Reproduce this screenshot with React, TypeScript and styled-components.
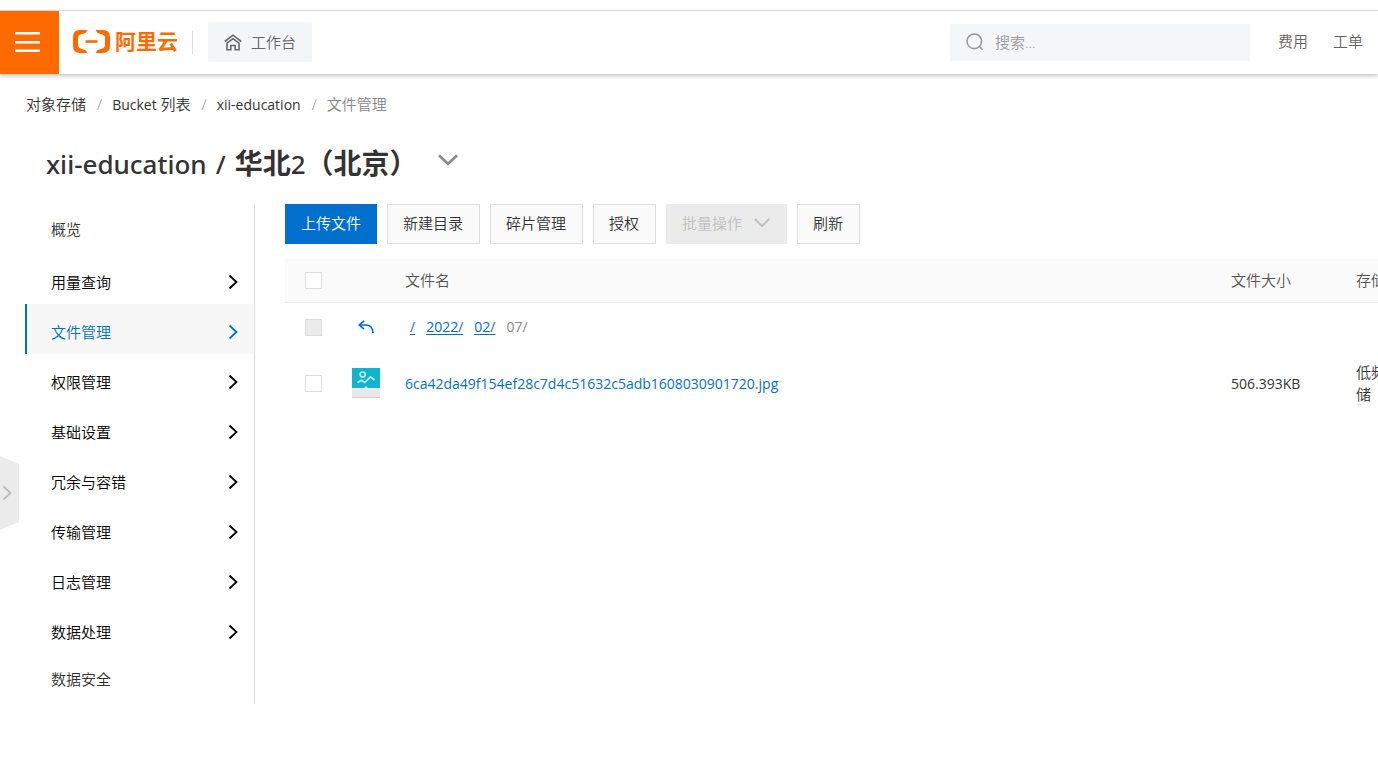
import React from "react";
import styled, { createGlobalStyle, css } from "styled-components";

const GlobalStyle = createGlobalStyle`
  *, *::before, *::after { box-sizing: border-box; }
  body {
    margin: 0;
    background: #fff;
    color: #333;
    font: 350 15px/22px "Open Sans", "Noto Sans CJK SC", sans-serif;
    overflow-x: hidden;
  }
  a { color: inherit; text-decoration: none; }
  button, input { font: inherit; }
  button { cursor: pointer; }
`;

const Latin = styled.span`
  font-size: 14px;
  font-weight: 400;
`;

const TopBar = styled.header`
  display: flex;
  align-items: center;
  height: 64px;
  margin-top: 10px;
  padding: 0 15px 1px 0;
  border-top: 1px solid #d9d9d9;
  background: #fff;
  box-shadow: 0 2px 4px rgba(0, 0, 0, 0.24);
`;

const MenuButton = styled.button`
  display: flex;
  align-items: center;
  justify-content: center;
  align-self: flex-start;
  flex: none;
  width: 59px;
  height: 63px;
  padding: 0 4px 2px 0;
  border: 0;
  background: #ff6a00;
`;

const Brand = styled.a`
  display: flex;
  align-items: center;
  gap: 5px;
  margin-left: 14px;
  padding-bottom: 1px;
  color: #ff6a00;
  font-size: 21px;
  font-weight: 700;
  line-height: 22px;
`;

const BrandName = styled.span`
  padding-bottom: 2px;
`;

const Divider = styled.span`
  width: 1px;
  height: 23px;
  margin: 0 15px 0 14px;
  background: #ddd;
`;

const Workbench = styled.a`
  display: flex;
  align-items: center;
  gap: 9px;
  height: 40px;
  padding: 0 16px;
  border-radius: 2px;
  background: #f4f5f7;
  color: #666;
`;

const Search = styled.label`
  display: flex;
  align-items: center;
  gap: 11px;
  width: 300px;
  height: 37px;
  margin-left: auto;
  padding: 0 16px;
  background: #f4f6f8;
`;

const SearchInput = styled.input`
  flex: 1;
  min-width: 0;
  padding: 0 0 1px;
  border: 0;
  outline: 0;
  background: transparent;
  color: #333;
  &::placeholder { color: #999; opacity: 1; }
`;

const TopLinks = styled.nav`
  display: flex;
  gap: 25px;
  margin-left: 28px;
  padding-bottom: 2px;
  color: #666;
`;

const Crumbs = styled.nav`
  display: flex;
  gap: 10px;
  padding: 19px 26px 0;
  color: #333;
`;

const CrumbLink = styled.a`
  padding-right: 1px;
`;

const Muted = styled.span`
  color: #888;
`;

const TitleRow = styled.div`
  display: flex;
  align-items: center;
  gap: 20px;
  padding: 27px 46px 0;
`;

const Title = styled.h1`
  display: flex;
  align-items: baseline;
  gap: 9px;
  margin: 0;
  font-size: 28px;
  line-height: 40px;
  font-weight: 700;
`;

const TitleLatin = styled.span`
  font-family: "Noto Sans", "Open Sans", sans-serif;
  font-size: 26px;
  font-weight: 500;
`;

const IconButton = styled.button`
  display: flex;
  padding: 0 0 7px;
  border: 0;
  background: none;
`;

const Body = styled.div`
  display: flex;
  margin-top: 20px;
  padding-left: 25px;
`;

const SideNav = styled.nav`
  flex: none;
  width: 230px;
  border-right: 1px solid #ddd;
`;

const SideItem = styled.a<{ $active?: boolean; $group?: boolean }>`
  display: flex;
  align-items: center;
  justify-content: space-between;
  height: 50px;
  padding: 0 15px 0 24px;
  border-left: 2px solid transparent;
  ${(p) => p.$group && css`
    padding-top: 5px;
    color: #000;
  `}
  ${(p) => p.$active && css`
    border-left-color: #0070cc;
    background: #f7f7f7;
    color: #0070cc;
  `}
`;

const Main = styled.main`
  flex: 1;
  min-width: 0;
  padding-left: 30px;
  overflow: hidden;
`;

const Toolbar = styled.div`
  display: flex;
  gap: 10px;
  margin-bottom: 15px;
`;

const ToolButton = styled.button<{ $primary?: boolean }>`
  display: flex;
  align-items: center;
  gap: 12px;
  height: 40px;
  padding: 0 16px 2px 15px;
  border: 1px solid #ddd;
  background: #fafafa;
  color: #333;
  white-space: nowrap;
  ${(p) => p.$primary && css`
    padding-right: 15px;
    border-color: #0070cc;
    background: #0070cc;
    color: #fff;
  `}
  &:disabled {
    border-color: #ebebeb;
    background: #ebebeb;
    color: #c1c1c1;
  }
`;

const Table = styled.table`
  width: calc(100% + 73px);
  table-layout: fixed;
  border-collapse: collapse;
`;

const HeadRow = styled.tr`
  height: 43px;
  border-bottom: 1px solid #ebebeb;
  background: #fafafa;
`;

const Row = styled.tr<{ $tall?: boolean }>`
  height: ${(p) => (p.$tall ? 62 : 50)}px;
`;

const HeadCell = styled.th`
  padding: 0 20px;
  color: #555;
  font-weight: 350;
  text-align: left;
`;

const Cell = styled.td`
  padding: 0 20px;
`;

const IconCell = styled.td`
  padding: 0;
  svg { display: block; margin: 0 auto; }
`;

const Col = styled.col<{ $w?: number }>`
  ${(p) => p.$w && `width: ${p.$w}px;`}
`;

const Check = styled.input`
  display: block;
  appearance: none;
  width: 17px;
  height: 17px;
  margin: 0;
  border: 1px solid #ddd;
  background: #fff;
  &:disabled { background: #ebebeb; }
`;

const Path = styled.div`
  display: flex;
  gap: 11px;
  padding-left: 5px;
  font-size: 14px;
  font-weight: 400;
`;

const PathLink = styled.a`
  color: #0070cc;
  text-decoration: underline;
  text-underline-offset: 2px;
`;

const FileLink = styled.a`
  color: #0070cc;
  font-size: 14px;
  font-weight: 400;
`;

const Drawer = styled.button`
  position: fixed;
  left: 0;
  top: 456px;
  display: flex;
  align-items: center;
  width: 19px;
  height: 74px;
  padding: 0 0 0 2px;
  border: 0;
  background: #ebebeb;
  clip-path: polygon(0 0, 100% 8px, 100% 66px, 0 100%);
`;

const ChevronRight = ({ color = "currentColor" }: { color?: string }) => (
  <svg width="11" height="16" viewBox="0 0 11 16" fill="none" stroke={color} strokeWidth="1.8" aria-hidden="true">
    <path d="M1.500 1.500 8.500 8l-7 6.500" />
  </svg>
);

const ChevronDown = ({ w, color }: { w: number; color: string }) => (
  <svg width={w} height={w * 0.6} viewBox="0 0 20 12" fill="none" stroke={color} strokeWidth="2.6" aria-hidden="true">
    <path d="M1 1.200 10 10l9-8.800" />
  </svg>
);

const sideItems = [
  { label: "概览" },
  { label: "用量查询", group: true },
  { label: "文件管理", group: true, active: true },
  { label: "权限管理", group: true },
  { label: "基础设置", group: true },
  { label: "冗余与容错", group: true },
  { label: "传输管理", group: true },
  { label: "日志管理", group: true },
  { label: "数据处理", group: true },
  { label: "数据安全" },
];

export default function App() {
  return (
    <>
      <GlobalStyle />
      <TopBar>
        <MenuButton aria-label="菜单">
          <svg width="25" height="20" viewBox="0 0 25 20" fill="#fff">
            <path d="M0 0h25v2.400H0zM0 9h25v2.400H0zM0 17.600h25V20H0z" />
          </svg>
        </MenuButton>
        <Brand href="#">
          <svg width="37" height="23" viewBox="0 0 37 23" fill="#ff6a00" aria-hidden="true">
            <path d="M14.500 0H7Q0 0 0 7v9q0 7 7 7h7.500l-2-3-5-1.500Q5 17.700 5 15.500v-8q0-2.200 2.500-3l5-1.500z" />
            <path d="M22.500 0H30q7 0 7 7v9q0 7-7 7h-7.500l2-3 5-1.500q2.500-.8 2.500-3v-8q0-2.200-2.500-3l-5-1.500z" />
            <path d="M12.500 10.200h12v2.600h-12z" />
          </svg>
          <BrandName>阿里云</BrandName>
        </Brand>
        <Divider />
        <Workbench href="#">
          <svg width="18" height="17" viewBox="0 0 18 17" fill="none" stroke="#666" strokeWidth="1.600" aria-hidden="true">
            <path d="M.8 7.500 9 1.200l8.200 6.300" />
            <path d="M3 9.200v6.500h3.800v-4.200h4.400v4.200H15V9.200L9 4.700z" />
          </svg>
          工作台
        </Workbench>
        <Search>
          <svg width="18" height="18" viewBox="0 0 18 18" fill="none" stroke="#999" strokeWidth="1.600" aria-hidden="true">
            <circle cx="8.300" cy="8.300" r="7.300" />
            <path d="m13 13.200 3.600 3.600" />
          </svg>
          <SearchInput type="text" placeholder="搜索..." aria-label="搜索" />
        </Search>
        <TopLinks>
          <a href="#">费用</a>
          <a href="#">工单</a>
        </TopLinks>
      </TopBar>

      <Crumbs>
        <CrumbLink href="#">对象存储</CrumbLink>
        <Muted>/</Muted>
        <CrumbLink href="#"><Latin>Bucket</Latin> 列表</CrumbLink>
        <Muted>/</Muted>
        <CrumbLink href="#"><Latin>xii-education</Latin></CrumbLink>
        <Muted>/</Muted>
        <Muted>文件管理</Muted>
      </Crumbs>

      <TitleRow>
        <Title>
          <TitleLatin>xii-education</TitleLatin>
          <TitleLatin>/</TitleLatin>
          <span>华北<TitleLatin>2</TitleLatin>（北京）</span>
        </Title>
        <IconButton aria-label="切换 Bucket">
          <ChevronDown w={20} color="#888" />
        </IconButton>
      </TitleRow>

      <Body>
        <SideNav>
          {sideItems.map((item) => (
            <SideItem key={item.label} href="#" $group={item.group} $active={item.active}>
              {item.label}
              {item.group && <ChevronRight />}
            </SideItem>
          ))}
        </SideNav>

        <Main>
          <Toolbar>
            <ToolButton $primary>上传文件</ToolButton>
            <ToolButton>新建目录</ToolButton>
            <ToolButton>碎片管理</ToolButton>
            <ToolButton>授权</ToolButton>
            <ToolButton disabled>
              批量操作
              <ChevronDown w={16} color="#c1c1c1" />
            </ToolButton>
            <ToolButton>刷新</ToolButton>
          </Toolbar>

          <Table>
            <colgroup>
              <Col $w={62} />
              <Col $w={38} />
              <Col />
              <Col $w={125} />
              <Col $w={115} />
            </colgroup>
            <thead>
              <HeadRow>
                <HeadCell><Check type="checkbox" aria-label="全选" /></HeadCell>
                <HeadCell />
                <HeadCell>文件名</HeadCell>
                <HeadCell>文件大小</HeadCell>
                <HeadCell>存储类型</HeadCell>
              </HeadRow>
            </thead>
            <tbody>
              <Row>
                <Cell><Check type="checkbox" aria-label="上级目录" disabled /></Cell>
                <IconCell>
                  <svg width="16" height="14" viewBox="0 0 16 14" fill="none" stroke="#0070cc" strokeWidth="1.700" aria-label="返回">
                    <path d="M6 .8 1.200 5 6 9.200" />
                    <path d="M1.500 5H8q6.500 0 7 8" />
                  </svg>
                </IconCell>
                <Cell colSpan={3}>
                  <Path>
                    <PathLink href="#">/</PathLink>
                    <PathLink href="#">2022/</PathLink>
                    <PathLink href="#">02/</PathLink>
                    <Muted>07/</Muted>
                  </Path>
                </Cell>
              </Row>
              <Row $tall>
                <Cell><Check type="checkbox" aria-label="选择文件" /></Cell>
                <IconCell>
                  <svg width="28" height="30" viewBox="0 0 28 30" aria-hidden="true">
                    <path d="M0 0h28v30H0z" fill="#e8e8e8" />
                    <path d="M0 29h28v1H0z" fill="#d2d2d2" />
                    <path d="M0 0h28v20H16l-2-2-2 2H0z" fill="#12b3cf" />
                    <g fill="none" stroke="#b5ebf3" strokeWidth="1.700">
                      <circle cx="10.700" cy="6.600" r="2.600" />
                      <path d="m5.500 14.800 3.700-2.600 3.600 2.200 5.700-5.600 4 3.200" />
                    </g>
                  </svg>
                </IconCell>
                <Cell>
                  <FileLink href="#">6ca42da49f154ef28c7d4c51632c5adb1608030901720.jpg</FileLink>
                </Cell>
                <Cell><Latin>506.393KB</Latin></Cell>
                <Cell>低频访问存储</Cell>
              </Row>
            </tbody>
          </Table>
        </Main>
      </Body>

      <Drawer aria-label="展开侧栏">
        <ChevronRight color="#bbb" />
      </Drawer>
    </>
  );
}
